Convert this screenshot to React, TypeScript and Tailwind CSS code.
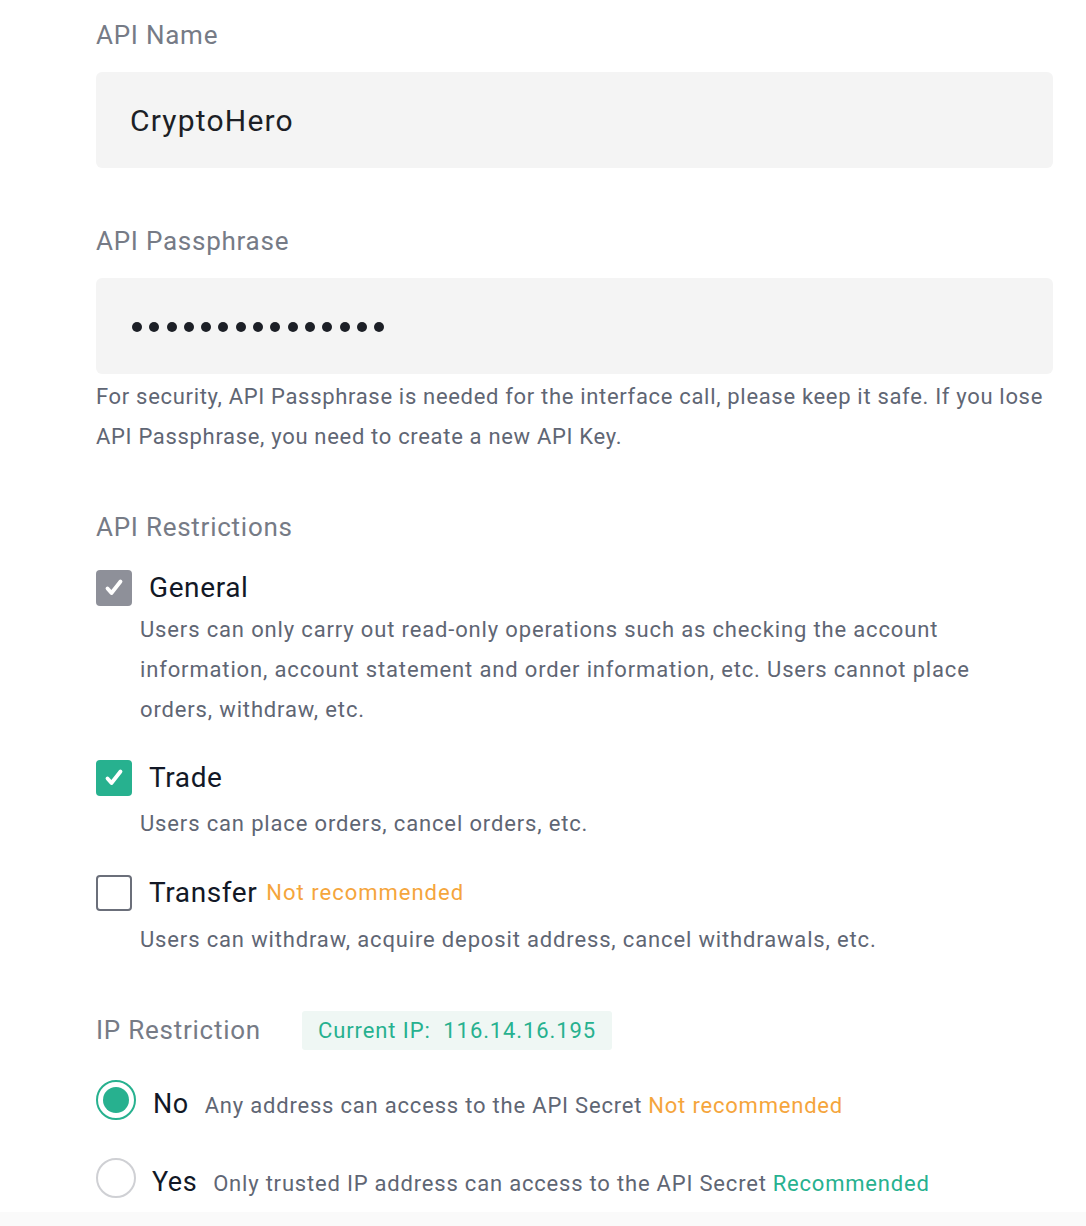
import React from 'react'

const FONT = "font-['Roboto','Liberation_Sans',sans-serif]"

type CheckState = 'gray' | 'green' | 'off'

function Check({ state }: { state: CheckState }) {
  if (state === 'off') {
    return <div className="w-[36px] h-[36px] rounded-[4px] border-2 border-[#6b6f7a] bg-white shrink-0" />
  }
  return (
    <div
      className={`w-[36px] h-[36px] rounded-[4px] shrink-0 flex items-center justify-center ${
        state === 'gray' ? 'bg-[#8e9099]' : 'bg-[#27b18f]'
      }`}
    >
      <svg viewBox="0 0 24 24" className="w-[24px] h-[24px]" fill="none" stroke="white" strokeWidth="3.8" strokeLinecap="round" strokeLinejoin="round">
        <path d="M5.5 12.5l4 4.5L18.5 5.5" />
      </svg>
    </div>
  )
}

function Permission({
  state,
  title,
  tag,
  desc,
  className,
  descGap,
}: {
  state: CheckState
  title: string
  tag?: string
  desc: string
  className?: string
  descGap: string
}) {
  return (
    <div className={className}>
      <div className="flex items-center h-[36px]">
        <Check state={state} />
        <span className="ml-[17px] text-[28px] text-[#121826] leading-none tracking-[0.6px]">{title}</span>
        {tag && <span className="ml-[9px] text-[22px] text-[#f5a53c] leading-none tracking-[1px]">{tag}</span>}
      </div>
      <p className={`${descGap} pl-[44px] text-[22px] leading-[40px] text-[#5f6674] tracking-[0.85px] max-w-[896px]`}>{desc}</p>
    </div>
  )
}

function Dots({ count }: { count: number }) {
  return (
    <div className="flex items-center gap-[7.3px]">
      {Array.from({ length: count }).map((_, i) => (
        <span key={i} className="w-[10px] h-[10px] rounded-full bg-[#1c1f26]" />
      ))}
    </div>
  )
}

export default function App() {
  return (
    <div className={`bg-white min-h-screen ${FONT}`}>
      <div className="pl-[96px] pr-[33px]">
        <div className="pt-[15px] text-[26px] leading-[40px] text-[#767b86] tracking-[0.75px]">API Name</div>
        <div className="mt-[17px] h-[96px] rounded-[6px] bg-[#f4f4f4] flex items-center px-[34px] text-[30px] text-[#1c1f26] tracking-[1.2px]">
          CryptoHero
        </div>

        <div className="mt-[53px] text-[26px] leading-[40px] text-[#767b86] tracking-[0.75px]">API Passphrase</div>
        <div className="mt-[17px] h-[96px] rounded-[6px] bg-[#f4f4f4] flex items-center pl-[36px] pr-[34px] pt-[2px]">
          <Dots count={15} />
        </div>
        <p className="mt-[3px] text-[22px] leading-[40px] text-[#5f6674] tracking-[0.68px]">
          For security, API Passphrase is needed for the interface call, please keep it safe. If you lose API Passphrase, you need to create a new API Key.
        </p>

        <div className="mt-[50px] text-[26px] leading-[40px] text-[#767b86] tracking-[0.75px]">API Restrictions</div>

        <Permission
          className="mt-[23px]"
          descGap="mt-[4px]"
          state="gray"
          title="General"
          desc="Users can only carry out read-only operations such as checking the account information, account statement and order information, etc. Users cannot place orders, withdraw, etc."
        />
        <Permission className="mt-[30px]" descGap="mt-[8px]" state="green" title="Trade" desc="Users can place orders, cancel orders, etc." />
        <Permission
          className="mt-[31px]"
          descGap="mt-[9px]"
          state="off"
          title="Transfer"
          tag="Not recommended"
          desc="Users can withdraw, acquire deposit address, cancel withdrawals, etc."
        />

        <div className="mt-[50px] flex items-center h-[40px]">
          <span className="text-[26px] text-[#767b86] tracking-[0.75px]">IP Restriction</span>
          <span className="ml-[41px] h-[39px] px-[16px] flex items-center rounded-[3px] bg-[#eff7f4] text-[22px] text-[#27b18f] tracking-[0.9px]">
            Current IP:&nbsp;&nbsp;116.14.16.195
          </span>
        </div>

        <div className="mt-[30px] flex items-center h-[40px]">
          <div className="w-[40px] h-[40px] rounded-full border-2 border-[#27b18f] flex items-center justify-center shrink-0">
            <div className="w-[26px] h-[26px] rounded-full bg-[#27b18f]" />
          </div>
          <div className="flex items-baseline pt-[8px]">
            <span className="ml-[17px] text-[27px] text-[#121826] tracking-[0.5px]">No</span>
            <span className="ml-[16px] text-[22px] text-[#5f6674] tracking-[0.8px]">Any address can access to the API Secret</span>
            <span className="ml-[6px] text-[22px] text-[#f5a53c] tracking-[0.8px]">Not recommended</span>
          </div>
        </div>

        <div className="mt-[38px] flex items-center h-[40px]">
          <div className="w-[40px] h-[40px] rounded-full border-2 border-[#cfd0d4] shrink-0" />
          <div className="flex items-baseline pt-[8px]">
            <span className="ml-[16px] text-[27px] text-[#121826] tracking-[0.5px]">Yes</span>
            <span className="ml-[16px] text-[22px] text-[#5f6674] tracking-[0.8px]">Only trusted IP address can access to the API Secret</span>
            <span className="ml-[6px] text-[22px] text-[#27b18f] tracking-[0.8px]">Recommended</span>
          </div>
        </div>
      </div>
      <div className="mt-[14px] h-[30px] bg-[#fafafa]" />
    </div>
  )
}
